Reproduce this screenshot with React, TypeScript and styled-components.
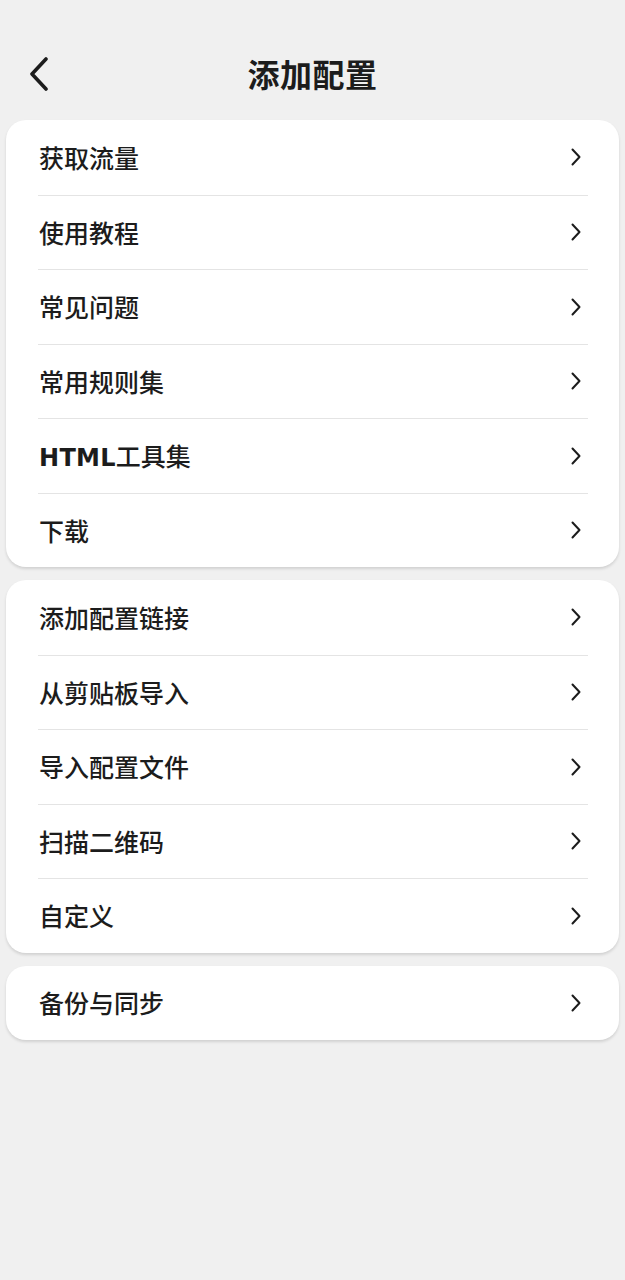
import styled, { createGlobalStyle } from 'styled-components';

const GlobalStyle = createGlobalStyle`
  html, body {
    margin: 0;
    padding: 0;
    background: #f0f0f0;
    font-family: "Noto Sans CJK SC", "Noto Sans", sans-serif;
    color: #1c1c1c;
  }
`

const groups: string[][] = [
  ['获取流量', '使用教程', '常见问题', '常用规则集', 'HTML工具集', '下载'],
  ['添加配置链接', '从剪贴板导入', '导入配置文件', '扫描二维码', '自定义'],
  ['备份与同步'],
];

const BackIcon = () => (
  <svg width="22" height="34" viewBox="0 0 22 34" fill="none">
    <path d="M18 2 L4 17 L18 32" stroke="#1c1c1c" strokeWidth="3.6" strokeLinecap="round" strokeLinejoin="round" />
  </svg>
);

const Chevron = () => (
  <svg width="14" height="20" viewBox="0 0 14 20" fill="none">
    <path d="M3.5 2.5 L10.5 10 L3.5 17.5" stroke="#1c1c1c" strokeWidth="2" strokeLinecap="round" strokeLinejoin="round" />
  </svg>
);

// latin runs use a wider, heavier face than the CJK text
const renderLabel = (label: string) =>
  label.split(/([A-Za-z]+)/).filter(Boolean).map((part, i) =>
    /^[A-Za-z]+$/.test(part) ? <Latin key={i}>{part}</Latin> : <span key={i}>{part}</span>
  );

const App = (): JSX.Element => {
  return (
    <Page>
      <GlobalStyle />
      <Header>
        <BackBtn>
          <BackIcon />
        </BackBtn>
        <Title>添加配置</Title>
      </Header>
      <Groups>
        {groups.map((items, gi) => (
          <Card key={gi}>
            {items.map((label) => (
              <Row key={label}>
                <Label>{renderLabel(label)}</Label>
                <Chevron />
              </Row>
            ))}
          </Card>
        ))}
      </Groups>
    </Page>
  )
};

export default App;

const Page = styled.div`
  min-height: 1280px;
  background: #f0f0f0;
  padding: 0 6px;
  box-sizing: border-box;
`
const Header = styled.div`
  position: relative;
  display: flex;
  align-items: center;
  justify-content: center;
  height: 120px;
  padding-bottom: 3px;
  box-sizing: border-box;
`
const BackBtn = styled.div`
  position: absolute;
  left: 22px;
  top: 57px;
  display: flex;
`
const Title = styled.div`
  font-size: 32px;
  font-weight: 700;
  letter-spacing: 0.5px;
  margin-top: 28px;
`
const Groups = styled.div`
  display: flex;
  flex-direction: column;
  gap: 13px;
`
const Card = styled.div`
  background: #fff;
  border-radius: 20px;
  padding: 0 32px;
  box-shadow: 0 2px 3px rgba(0, 0, 0, 0.13);
`
const Row = styled.div`
  display: flex;
  align-items: center;
  justify-content: space-between;
  box-sizing: border-box;
  height: 74.5px;
  margin-right: -1px;

  & + & {
    border-top: 1px solid #e4e4e4;
  }

  svg {
    margin-right: 5px;
  }
`
const Label = styled.span`
  font-size: 25px;
  font-weight: 500;
  padding-left: 1px;
  margin-top: -1px;
`
const Latin = styled.span`
  font-family: "DejaVu Sans", sans-serif;
  font-weight: 700;
  font-size: 24px;
  letter-spacing: 0.3px;
`
